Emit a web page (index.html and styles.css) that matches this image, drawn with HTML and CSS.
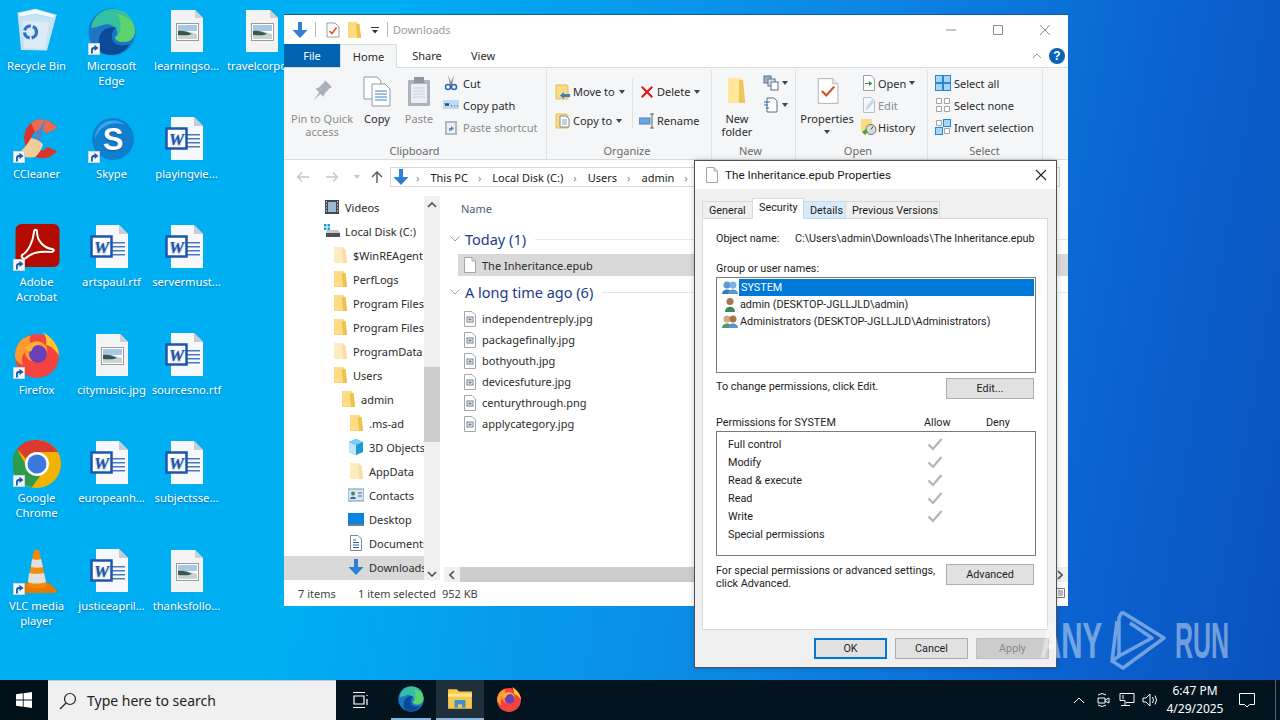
FILE: index.html
```html
<!DOCTYPE html>
<html lang="en">
<head>
<meta charset="utf-8">
<title>Downloads</title>
<link rel="stylesheet" href="styles.css">
</head>
<body>
<svg class="sprite" width="0" height="0" aria-hidden="true">
<defs>
<symbol id="s-arrow" viewBox="0 0 12 12"><rect x=".5" y=".5" width="11" height="11" fill="#f4f8fc" stroke="#c8d4de"/><path d="M3 10.500V7c0-2 1.500-3.200 3.500-3.200V1.800L10.500 5 6.500 8V6C5.200 6 4.800 6.800 4.800 8v2.500z" fill="#1c5aa8"/></symbol>
<symbol id="s-bin" viewBox="0 0 48 48"><path d="M4.500 5 22.500 1 43.500 7 34 42.500 8 42z" fill="#c6e2f4"/><path d="M4.500 5 22.500 1 43.500 7 40 10 22 6 7 9z" fill="#f2fbff" stroke="#a5cfe8" stroke-width=".6"/><path d="M10 13 36 14 32 41 11 40z" fill="#dcecf6"/><circle cx="17.500" cy="24" r="6" fill="none" stroke="#2e73c8" stroke-width="3.200" stroke-dasharray="8 2"/></symbol>
<symbol id="s-edge" viewBox="0 0 48 48"><circle cx="24" cy="24" r="23.500" fill="#1b76c8"/><path d="M3 20C5 8 14 1 25 1c12 0 22 8 22 22 0 8-6 11-12 11-4 0-8-2-8-5 2-1 3-3 2-6-2-5-8-8-14-6C10 19 6 20 3 20z" fill="#35c1a1"/><path d="M30 6c9 2 17 8 17 17 0 8-6 11-12 11-4 0-8-2-8-5 5-1 8-8 3-23z" fill="#6bd85e" opacity=".75"/><path d="M14 45C26 50 38 44 41 36c-8 3-14 1-16-3-3-6 0-12 4-13-8-3-17 2-18 11-1 6 0 11 3 14z" fill="#0c4a96"/></symbol>
<symbol id="s-ccleaner" viewBox="0 0 48 48"><path d="M44 12C38 3 26 1 18 7 9 14 9 30 18 38c8 7 20 5 26-3l-10-4c-3 4-8 5-12 2-5-4-5-13 0-17 4-3 9-2 12 1z" fill="#d8362a"/><path d="M44 12C38 3 26 1 18 7l4 9c4-3 9-2 12 1z" fill="#ee6a4e"/><path d="M33 2 27 26l-7-3z" fill="#4f87c8"/><path d="M18 22c5 1 10 3 12 7-2 5-4 9-8 12-6 1-13 0-18-3 6-4 10-9 14-16z" fill="#f0ce9a"/></symbol>
<symbol id="s-skype" viewBox="0 0 48 48"><circle cx="25" cy="23" r="21" fill="#0f7fd0"/><path d="M7 23a18 18 0 0 1 30-14A22 22 0 0 0 7 23z" fill="#37a9ea"/><text x="25" y="34" text-anchor="middle" font-family="Liberation Sans, sans-serif" font-weight="700" font-size="31" fill="#fff">S</text></symbol>
<symbol id="s-acrobat" viewBox="0 0 48 48"><rect x="2.500" y="0" width="44" height="43" rx="6" fill="#b30b00"/><path d="M9 31c6-3 11-13 12-23 .2-3 3-3 3 0 0 9 7 16 15 17 3 .5 2 3-1 3-10-1-20 1-25 6-3 2-5-1-4-3z" fill="none" stroke="#fff" stroke-width="2"/></symbol>
<symbol id="s-firefox" viewBox="0 0 48 48"><circle cx="24" cy="24" r="22" fill="#f5443f"/><path d="M2 24C2 12 10 4 18 4c-2 3-2 5 0 7 4-3 12-2 15 3 4 7-1 16-10 16-6 0-11-4-11-10-3 3-4 8-2 13-5-2-8-5-8-9z" fill="#ff9b2c"/><path d="M30 0c8 5 16 13 16 24-3-6-8-10-13-11 1-5 0-9-3-13z" fill="#ffc62e"/><circle cx="25" cy="22" r="9" fill="#6b3fb7"/><path d="M12 16c4-5 12-7 18-4-6 0-10 2-11 6-2 3-5 1-7-2z" fill="#ffb13a"/></symbol>
<symbol id="s-chrome" viewBox="0 0 48 48"><circle cx="24" cy="24" r="24" fill="#f0b400"/><path d="M24 0a24 24 0 0 1 21 12H24a12 12 0 0 0-11 7L4 9A24 24 0 0 1 24 0z" fill="#db3a2e"/><path d="M4 9l10 18a12 12 0 0 0 13 9l-8 11A24 24 0 0 1 4 9z" fill="#2f9a47"/><circle cx="24" cy="24" r="12" fill="#fff"/><circle cx="24" cy="24" r="9.500" fill="#3c78dc"/></symbol>
<symbol id="s-vlc" viewBox="0 0 48 48"><path d="M7 42 12 35h24l8 7c0 2-2 3-5 3H10c-3 0-3-1-3-3z" fill="#e87a00"/><path d="M21 2h5l8 36c-5 3-15 3-20 0z" fill="#f58a07"/><path d="M19 11c2 1 7 1 9 0l2 8c-3 1-9 1-12 0zM16 25c4 1 12 1 15 0l2 9c-5 2-14 2-18 0z" fill="#e0e0e0"/></symbol>
<symbol id="s-imgdoc" viewBox="0 0 48 48"><path d="M8 2h24l8 8v34H8z" fill="#f3f3f3"/><path d="M32 2v8h8z" fill="#d0d0d0"/><rect x="13.500" y="15.500" width="22" height="17" fill="#fff" stroke="#9b9b9b"/><path d="M15 17h19v6H15z" fill="#a8c8e4"/><path d="M15 23c6-1 13 1 19 3v5H15z" fill="#c8d4d4"/><path d="M15 23c5-1 10 1 14 3-4 2-10 1-14 1z" fill="#3a5650"/></symbol>
<symbol id="s-word" viewBox="0 0 48 48"><path d="M8 1h23l9 9v34H8z" fill="#f7f8fb"/><path d="M31 1v9h9z" fill="#c9ccd3"/><path d="M24 18h13v1.500H24zM24 22h13v1.500H24zM24 26h13v1.500H24zM24 30h13v1.500H24z" fill="#4a7abd"/><rect x="3.500" y="12.500" width="20" height="20" fill="#fff" stroke="#1d55ad" stroke-width="2.500"/><text x="13.500" y="28.500" text-anchor="middle" font-family="Liberation Serif, serif" font-style="italic" font-weight="700" font-size="17" fill="#1d55ad">W</text></symbol>
<symbol id="s-down" viewBox="0 0 16 16"><path d="M6 0h4v8h5.500L8 16 .5 8H6z" fill="#2f7fd6"/></symbol>
<symbol id="s-folder" viewBox="0 0 16 16"><path d="M2 0h9l1 1 1 1v14H2z" fill="#fddb82"/><path d="M10 2h3.500L15 14v2h-4z" fill="#efc04c"/></symbol>
<symbol id="s-bigfolder" viewBox="0 0 32 32"><path d="M7 3h13l2 3v22H7z" fill="#ffe79b"/><path d="M18 5h4l2 20v3h-6z" fill="#f0c65a"/></symbol>
<symbol id="s-props" viewBox="0 0 16 16"><path d="M2 1h8l4 4v10H2z" fill="#fff" stroke="#9d9d9d"/><path d="M4.500 9 7 11.500l4.500-6" fill="none" stroke="#d8532a" stroke-width="1.500"/></symbol>
<symbol id="s-blank" viewBox="0 0 16 16"><path d="M2.500 .5h7.500l3.500 3.500v11.500h-11z" fill="#fff" stroke="#a6a6a6"/><path d="M10 .5V4h3.500" fill="none" stroke="#a6a6a6"/></symbol>
<symbol id="s-jpg" viewBox="0 0 16 16"><path d="M2.500 .5h7.500l3.500 3.500v11.500h-11z" fill="#fff" stroke="#a6a6a6"/><rect x="5" y="6" width="6" height="5" fill="#fff" stroke="#6c7f91"/><rect x="6.500" y="7.500" width="3" height="2" fill="#6c7f91"/></symbol>
<symbol id="s-pin" viewBox="-6 -6 44 44"><path d="M14 20 4 29l8-11-5-5 5-2 7-7 1-3 10 10-3 1-7 7-2 5z" fill="#a9b1bd"/></symbol>
<symbol id="s-copy" viewBox="0 0 32 32"><path d="M3 2h13l4 4v18H3z" fill="#fff" stroke="#8e9aa8"/><path d="M11 9h13l5 5v17H11z" fill="#fff" stroke="#8e9aa8"/><path d="M14 16h12M14 19h12M14 22h12M14 25h12" stroke="#3d80c4"/></symbol>
<symbol id="s-paste" viewBox="0 0 32 32"><rect x="5" y="5" width="22" height="26" rx="1" fill="#acb5bf"/><rect x="8" y="9" width="16" height="19" fill="#ebeff4"/><rect x="11" y="2" width="10" height="6" fill="#8e98a3"/><path d="M10 13h12M10 16h12M10 19h12M10 22h12" stroke="#c9d3de"/></symbol>
<symbol id="s-cut" viewBox="0 0 16 16"><path d="M5 0 8 7 11 0 9 10 7 10z" fill="#8a8a8a"/><circle cx="5" cy="12" r="2.500" fill="none" stroke="#2a6bb0" stroke-width="1.500"/><circle cx="11" cy="12" r="2.500" fill="none" stroke="#2a6bb0" stroke-width="1.500"/></symbol>
<symbol id="s-path" viewBox="0 0 16 16"><rect y="3" width="16" height="9" fill="#bcdcf5"/><path d="M2 6l1 3 1-3 1 3 1-3M8 9h1M11 9h1M14 9h1" stroke="#244e7a" fill="none"/></symbol>
<symbol id="s-pshort" viewBox="0 0 16 16"><rect x="2" y="2" width="12" height="14" fill="#b0b8c2"/><rect x="4" y="4" width="8" height="10" fill="#edf0f4"/><path d="M6 12V9h2V7l3 2.500L8 12v-1.500H7.500V12z" fill="#5e86b0"/></symbol>
<symbol id="s-move" viewBox="0 0 16 16"><path d="M1 1h11l1 2v12H1z" fill="#fddb82" stroke="#e4bc52"/><path d="M15 10H9V8l-4 3.500L9 15v-2h6z" fill="#3c7cc2"/></symbol>
<symbol id="s-copyto" viewBox="0 0 16 16"><path d="M1 1h11l1 2v12H1z" fill="#fddb82" stroke="#e4bc52"/><path d="M5 3h6l3 3v8H5z" fill="#fff" stroke="#7c8894"/><path d="M7 7h5M7 9h5M7 11h5" stroke="#8aa0b4"/></symbol>
<symbol id="s-x" viewBox="0 0 16 16"><path d="M2 3.500 3.500 2 8 6.500 12.500 2 14 3.500 9.500 8 14 12.500 12.500 14 8 9.500 3.500 14 2 12.500 6.500 8z" fill="#e01c1c"/></symbol>
<symbol id="s-rename" viewBox="0 0 16 16"><rect x="0" y="5" width="11" height="6" fill="#6aa7df" stroke="#4682bd"/><path d="M13 1v14M11 1h4M11 15h4" stroke="#5d5d5d" fill="none"/></symbol>
<symbol id="s-newitem" viewBox="0 0 16 16"><rect x="1" y="1" width="7" height="7" fill="#9fb3c4" stroke="#5d7185"/><rect x="5" y="4" width="7" height="7" fill="#dde6ee" stroke="#5d7185"/><rect x="8" y="7" width="7" height="8" fill="#fff" stroke="#5d7185"/></symbol>
<symbol id="s-easy" viewBox="0 0 16 16"><path d="M4 1h7l3 3v11H4z" fill="#fff" stroke="#5d7185"/><path d="M1 5h6M1 8h4M3 11h3" stroke="#2a6bb0" fill="none"/></symbol>
<symbol id="s-bigprops" viewBox="-6 -1 44 38"><path d="M4 1h20l7 7v27H4z" fill="#fff" stroke="#9a9a9a"/><path d="M24 1v7h7" fill="#eee" stroke="#9a9a9a"/><path d="M9 18l6 6L26 12" fill="none" stroke="#d5532c" stroke-width="3"/></symbol>
<symbol id="s-open" viewBox="0 0 16 16"><path d="M2.500.5h7.500l3.500 3.500v11.500h-11z" fill="#fff" stroke="#9aa3ad"/><path d="M4 8h4V6l3.500 2.500L8 11V9H4z" fill="#3b9a3b"/></symbol>
<symbol id="s-edit" viewBox="0 0 16 16"><path d="M2.500.5h7.500l3.500 3.500v11.500h-11z" fill="#f4f7fb" stroke="#b5c0cc"/><path d="M4 14 6 9l5-6 2 2-5 6z" fill="#c4d6e8"/></symbol>
<symbol id="s-history" viewBox="0 0 16 16"><rect width="11" height="12" fill="#fddb82"/><circle cx="10" cy="10.500" r="5" fill="#d8dbe0" stroke="#707070"/><path d="M1 13l4-3 2 3-3 3z" fill="#4ca23d"/><path d="M10 10.500l2-3" stroke="#444"/></symbol>
<symbol id="s-all" viewBox="0 0 16 16"><rect width="16" height="16" fill="#2a85d6"/><path d="M1 1h6v6H1zM9 1h6v6H9zM1 9h6v6H1zM9 9h6v6H9z" fill="#a6d6f5"/></symbol>
<symbol id="s-none" viewBox="0 0 16 16"><path d="M1.500 1.500h5v5h-5zM9.500 1.500h5v5h-5zM1.500 9.500h5v5h-5zM9.500 9.500h5v5h-5z" fill="#fff" stroke="#a2a2a2"/></symbol>
<symbol id="s-invert" viewBox="0 0 16 16"><path d="M1.500 1.500h5v5h-5zM9.500 9.500h5v5h-5z" fill="#fff" stroke="#a2a2a2"/><path d="M8 0h8v8H8zM0 8h8v8H0z" fill="#2a85d6"/><path d="M9 1h6v6H9zM1 9h6v6H1z" fill="#a6d6f5"/></symbol>
<symbol id="s-video" viewBox="0 0 16 16"><rect x="1" y="1" width="14" height="14" fill="#3d4a55"/><rect x="4" y="3" width="8" height="10" fill="#9dbad4"/><path d="M2 3h1M2 6h1M2 9h1M2 12h1M13 3h1M13 6h1M13 9h1M13 12h1" stroke="#fff"/></symbol>
<symbol id="s-disk" viewBox="0 0 16 16"><rect x="2" y="10" width="14" height="4" fill="#4c5056"/><path d="M3 7h11l2 3H2z" fill="#c4c8cc"/><path d="M0 1h2.500v2.500H0zM3.500 1H6v2.500H3.500zM0 4.500h2.500V7H0zM3.500 4.500H6V7H3.500z" fill="#1d9bd8"/></symbol>
<symbol id="s-3d" viewBox="0 0 16 16"><path d="M8 0 15 3v10l-7 3-7-3V3z" fill="#1a9bd6"/><path d="M1 3l7 3v10l-7-3z" fill="#bfe7f6"/><path d="M8 0l7 3-7 3-7-3z" fill="#7fd0ee"/></symbol>
<symbol id="s-contacts" viewBox="0 0 16 16"><rect y="2" width="16" height="12" fill="#d7e6f3" stroke="#7a95ad"/><circle cx="5" cy="6.500" r="2" fill="#3d8a62"/><path d="M2 12c0-3 6-3 6 0z" fill="#3d6a8a"/><path d="M10 6h4M10 9h4" stroke="#567"/></symbol>
<symbol id="s-desktop" viewBox="0 0 16 16"><rect y="2" width="16" height="11" fill="#0a84e0"/><rect y="13" width="16" height="2" fill="#6d7d8c"/></symbol>
<symbol id="s-docs" viewBox="0 0 16 16"><path d="M2.500.5h7.500l3.500 3.500v11.500h-11z" fill="#fff" stroke="#7a8a98"/><path d="M5 5h3M5 7.500h6M5 10h6M5 12.500h6" stroke="#34648f"/></symbol>
<symbol id="s-user1" viewBox="0 0 16 16"><circle cx="5" cy="5" r="3.500" fill="#5b9bd5"/><path d="M0 14c0-6 10-6 10 0z" fill="#3b78b8"/><circle cx="11" cy="5" r="3.500" fill="#7eb2e0"/><path d="M6 14c0-6 10-6 10 0z" fill="#5a94cf"/></symbol>
<symbol id="s-user2" viewBox="0 0 16 16"><circle cx="8" cy="4.500" r="3.500" fill="#a6764f"/><path d="M3 15c0-7 10-7 10 0z" fill="#3e8a5e"/></symbol>
<symbol id="s-user3" viewBox="0 0 16 16"><circle cx="5" cy="5" r="3.500" fill="#d4a878"/><path d="M0 14c0-6 10-6 10 0z" fill="#4d9a6b"/><circle cx="11" cy="5" r="3.500" fill="#a6764f"/><path d="M6 14c0-6 10-6 10 0z" fill="#5a94cf"/></symbol>
<symbol id="s-check" viewBox="0 0 16 16"><path d="M1.500 8.500 6 13l8.500-10" fill="none" stroke="#b4b4b4" stroke-width="2.200"/></symbol>
<symbol id="s-tb-files" viewBox="0 0 24 24"><path d="M1 3h8l2 2h12v16H1z" fill="#f6c94c"/><path d="M1 7h22v3H1z" fill="#ffe58a"/><path d="M7 13h10v7H7z" fill="#3e8fd0"/><path d="M10 17h4v3h-4z" fill="#f6c94c"/></symbol>
</defs>
</svg>

<div class="screen">
  <main class="desktop">
    <div class="icon-grid">
      <div class="dicon"><svg class="dimg"><use href="#s-bin"/></svg><span>Recycle Bin</span></div>
      <div class="dicon"><span class="wrap"><svg class="dimg"><use href="#s-ccleaner"/></svg><svg class="arrow"><use href="#s-arrow"/></svg></span><span>CCleaner</span></div>
      <div class="dicon"><span class="wrap"><svg class="dimg"><use href="#s-acrobat"/></svg><svg class="arrow"><use href="#s-arrow"/></svg></span><span>Adobe<br>Acrobat</span></div>
      <div class="dicon"><span class="wrap"><svg class="dimg"><use href="#s-firefox"/></svg><svg class="arrow"><use href="#s-arrow"/></svg></span><span>Firefox</span></div>
      <div class="dicon"><span class="wrap"><svg class="dimg"><use href="#s-chrome"/></svg><svg class="arrow"><use href="#s-arrow"/></svg></span><span>Google<br>Chrome</span></div>
      <div class="dicon"><span class="wrap"><svg class="dimg"><use href="#s-vlc"/></svg><svg class="arrow"><use href="#s-arrow"/></svg></span><span>VLC media<br>player</span></div>

      <div class="dicon"><span class="wrap"><svg class="dimg"><use href="#s-edge"/></svg><svg class="arrow"><use href="#s-arrow"/></svg></span><span>Microsoft<br>Edge</span></div>
      <div class="dicon"><span class="wrap"><svg class="dimg"><use href="#s-skype"/></svg><svg class="arrow"><use href="#s-arrow"/></svg></span><span>Skype</span></div>
      <div class="dicon"><svg class="dimg"><use href="#s-word"/></svg><span>artspaul.rtf</span></div>
      <div class="dicon"><svg class="dimg"><use href="#s-imgdoc"/></svg><span>citymusic.jpg</span></div>
      <div class="dicon"><svg class="dimg"><use href="#s-word"/></svg><span>europeanh...</span></div>
      <div class="dicon"><svg class="dimg"><use href="#s-word"/></svg><span>justiceapril...</span></div>

      <div class="dicon"><svg class="dimg"><use href="#s-imgdoc"/></svg><span>learningso...</span></div>
      <div class="dicon"><svg class="dimg"><use href="#s-word"/></svg><span>playingvie...</span></div>
      <div class="dicon"><svg class="dimg"><use href="#s-word"/></svg><span>servermust...</span></div>
      <div class="dicon"><svg class="dimg"><use href="#s-word"/></svg><span>sourcesno.rtf</span></div>
      <div class="dicon"><svg class="dimg"><use href="#s-word"/></svg><span>subjectsse...</span></div>
      <div class="dicon"><svg class="dimg"><use href="#s-imgdoc"/></svg><span>thanksfollo...</span></div>

      <div class="dicon"><svg class="dimg"><use href="#s-imgdoc"/></svg><span>travelcorpo...</span></div>
    </div>

    <section class="explorer">
      <header class="titlebar">
        <svg class="i16"><use href="#s-down"/></svg>
        <i class="qsep"></i>
        <svg class="i16"><use href="#s-props"/></svg>
        <svg class="i16"><use href="#s-folder"/></svg>
        <svg class="qdrop" viewBox="0 0 8 8"><path d="M0 1h8v1H0zM1 4h6L4 7.500z" fill="#333"/></svg>
        <i class="qsep"></i>
        <span class="wintitle">Downloads</span>
        <div class="winctl">
          <svg viewBox="0 0 12 12"><path d="M1 6h10" stroke="#8d8d8d"/></svg>
          <svg viewBox="0 0 12 12"><path d="M1.500 1.500h9v9h-9z" fill="none" stroke="#8d8d8d"/></svg>
          <svg viewBox="0 0 12 12"><path d="M1 1l10 10M11 1 1 11" stroke="#8d8d8d"/></svg>
        </div>
      </header>
      <nav class="tabs">
        <span class="tab file">File</span>
        <span class="tab home">Home</span>
        <span class="tab share">Share</span>
        <span class="tab view">View</span>
        <svg class="collapse" viewBox="0 0 10 6"><path d="M1 5l4-4 4 4" fill="none" stroke="#a0a0a0"/></svg>
        <span class="help">?</span>
      </nav>
      <div class="ribbon">
        <div class="group g-clip">
          <div class="gbody">
            <div class="big pin off"><svg class="bigimg"><use href="#s-pin"/></svg><span>Pin to Quick<br>access</span></div>
            <div class="big copy"><svg class="bigimg"><use href="#s-copy"/></svg><span>Copy</span></div>
            <div class="big paste off"><svg class="bigimg"><use href="#s-paste"/></svg><span>Paste</span></div>
            <div class="rows">
              <div class="row"><svg class="i16"><use href="#s-cut"/></svg>Cut</div>
              <div class="row"><svg class="i16"><use href="#s-path"/></svg>Copy path</div>
              <div class="row off"><svg class="i16"><use href="#s-pshort"/></svg>Paste shortcut</div>
            </div>
          </div>
          <div class="glabel">Clipboard</div>
        </div>
        <div class="group g-org">
          <div class="gbody">
            <div class="rows two c-move">
              <div class="row"><svg class="i16"><use href="#s-move"/></svg>Move to<b class="caret"></b></div>
              <div class="row"><svg class="i16"><use href="#s-copyto"/></svg>Copy to<b class="caret"></b></div>
            </div>
            <i class="vsep"></i>
            <div class="rows two">
              <div class="row"><svg class="i16"><use href="#s-x"/></svg>Delete<b class="caret"></b></div>
              <div class="row"><svg class="i16"><use href="#s-rename"/></svg>Rename</div>
            </div>
          </div>
          <div class="glabel">Organize</div>
        </div>
        <div class="group g-new">
          <div class="gbody">
            <div class="big newf"><svg class="bigimg"><use href="#s-bigfolder"/></svg><span>New<br>folder</span></div>
            <div class="rows tiny">
              <div class="row"><svg class="i16"><use href="#s-newitem"/></svg><b class="caret"></b></div>
              <div class="row"><svg class="i16"><use href="#s-easy"/></svg><b class="caret"></b></div>
            </div>
          </div>
          <div class="glabel">New</div>
        </div>
        <div class="group g-open">
          <div class="gbody">
            <div class="big propsb"><svg class="bigimg"><use href="#s-bigprops"/></svg><span>Properties</span><b class="caret solo"></b></div>
            <div class="rows">
              <div class="row"><svg class="i16"><use href="#s-open"/></svg>Open<b class="caret"></b></div>
              <div class="row off"><svg class="i16"><use href="#s-edit"/></svg>Edit</div>
              <div class="row"><svg class="i16"><use href="#s-history"/></svg>History</div>
            </div>
          </div>
          <div class="glabel">Open</div>
        </div>
        <div class="group g-sel">
          <div class="gbody">
            <div class="rows">
              <div class="row"><svg class="i16"><use href="#s-all"/></svg>Select all</div>
              <div class="row"><svg class="i16"><use href="#s-none"/></svg>Select none</div>
              <div class="row"><svg class="i16"><use href="#s-invert"/></svg>Invert selection</div>
            </div>
          </div>
          <div class="glabel">Select</div>
        </div>
      </div>
      <div class="addrbar">
        <svg class="navbtn" viewBox="0 0 14 12"><path d="M13 6H2M6 1.500 1.500 6 6 10.500" fill="none" stroke="#c6c6c6" stroke-width="1.300"/></svg>
        <svg class="navbtn" viewBox="0 0 14 12"><path d="M1 6h11M8 1.500 12.500 6 8 10.500" fill="none" stroke="#c6c6c6" stroke-width="1.300"/></svg>
        <b class="caret pale"></b>
        <svg class="navbtn up" viewBox="0 0 14 14"><path d="M7 13V2M2 7l5-5 5 5" fill="none" stroke="#5f5f5f" stroke-width="1.500"/></svg>
        <div class="addr">
          <svg class="i16"><use href="#s-down"/></svg>
          <span class="sep">›</span><span>This PC</span>
          <span class="sep">›</span><span>Local Disk (C:)</span>
          <span class="sep">›</span><span>Users</span>
          <span class="sep">›</span><span>admin</span>
          <span class="sep">›</span>
        </div>
      </div>
      <div class="fbody">
        <aside class="navpane">
          <ul class="tree">
            <li class="l0"><svg class="i16"><use href="#s-video"/></svg>Videos</li>
            <li class="l00"><svg class="i16"><use href="#s-disk"/></svg>Local Disk (C:)</li>
            <li class="l1"><svg class="i16 faded"><use href="#s-folder"/></svg>$WinREAgent</li>
            <li class="l1"><svg class="i16"><use href="#s-folder"/></svg>PerfLogs</li>
            <li class="l1"><svg class="i16"><use href="#s-folder"/></svg>Program Files</li>
            <li class="l1"><svg class="i16"><use href="#s-folder"/></svg>Program Files (x86)</li>
            <li class="l1"><svg class="i16 faded"><use href="#s-folder"/></svg>ProgramData</li>
            <li class="l1"><svg class="i16"><use href="#s-folder"/></svg>Users</li>
            <li class="l2"><svg class="i16"><use href="#s-folder"/></svg>admin</li>
            <li class="l3"><svg class="i16"><use href="#s-folder"/></svg>.ms-ad</li>
            <li class="l3"><svg class="i16"><use href="#s-3d"/></svg>3D Objects</li>
            <li class="l3"><svg class="i16 faded"><use href="#s-folder"/></svg>AppData</li>
            <li class="l3"><svg class="i16"><use href="#s-contacts"/></svg>Contacts</li>
            <li class="l3"><svg class="i16"><use href="#s-desktop"/></svg>Desktop</li>
            <li class="l3"><svg class="i16"><use href="#s-docs"/></svg>Documents</li>
            <li class="l3 cur"><svg class="i16"><use href="#s-down"/></svg>Downloads</li>
          </ul>
          <div class="vscroll">
            <svg viewBox="0 0 10 6"><path d="M1 5l4-4 4 4" fill="none" stroke="#505050" stroke-width="1.600"/></svg>
            <div class="vtrack"><i class="vthumb"></i></div>
            <svg viewBox="0 0 10 6"><path d="M1 1l4 4 4-4" fill="none" stroke="#505050" stroke-width="1.600"/></svg>
          </div>
        </aside>
        <section class="files">
          <div class="colhead">Name</div>
          <div class="ghead"><svg viewBox="0 0 10 6"><path d="M.5.500l4.500 4.500L9.500.5" fill="none" stroke="#9aa5b2"/></svg><span>Today (1)</span><i></i></div>
          <div class="frow sel"><svg class="i16"><use href="#s-blank"/></svg>The Inheritance.epub</div>
          <div class="ghead g2"><svg viewBox="0 0 10 6"><path d="M.5.500l4.500 4.500L9.500.5" fill="none" stroke="#9aa5b2"/></svg><span>A long time ago (6)</span><i></i></div>
          <div class="flist">
            <div class="frow"><svg class="i16"><use href="#s-jpg"/></svg>independentreply.jpg</div>
            <div class="frow"><svg class="i16"><use href="#s-jpg"/></svg>packagefinally.jpg</div>
            <div class="frow"><svg class="i16"><use href="#s-jpg"/></svg>bothyouth.jpg</div>
            <div class="frow"><svg class="i16"><use href="#s-jpg"/></svg>devicesfuture.jpg</div>
            <div class="frow"><svg class="i16"><use href="#s-jpg"/></svg>centurythrough.png</div>
            <div class="frow"><svg class="i16"><use href="#s-jpg"/></svg>applycategory.jpg</div>
          </div>
          <div class="hscroll">
            <svg viewBox="0 0 6 10"><path d="M5 1 1 5l4 4" fill="none" stroke="#505050" stroke-width="1.600"/></svg>
            <i class="hthumb"></i>
            <svg viewBox="0 0 6 10"><path d="M1 1l4 4-4 4" fill="none" stroke="#505050" stroke-width="1.600"/></svg>
          </div>
        </section>
      </div>
      <footer class="status">
        <span class="st1">7 items</span><span class="st2">1 item selected</span><span>952 KB</span>
        <svg class="stview" viewBox="0 0 10 10"><path d="M.5.500h9v9h-9zM3 3h5M3 5h5M3 7h5" fill="none" stroke="#7a7a7a"/></svg>
      </footer>
    </section>

    <section class="dialog">
      <header class="dtitle">
        <svg class="i16"><use href="#s-blank"/></svg>
        <span>The Inheritance.epub Properties</span>
        <svg class="dclose" viewBox="0 0 12 12"><path d="M1 1l10 10M11 1 1 11" stroke="#222" stroke-width="1.100"/></svg>
      </header>
      <div class="dbody">
        <div class="dtabs">
          <span class="dtab">General</span>
          <span class="dtab act">Security</span>
          <span class="dtab hov">Details</span>
          <span class="dtab">Previous Versions</span>
        </div>
        <div class="dpanel">
          <div class="objrow"><span class="objk">Object name:</span><span>C:\Users\admin\Downloads\The Inheritance.epub</span></div>
          <div class="lbl grp">Group or user names:</div>
          <div class="listbox">
            <div class="lrow"><svg class="i16"><use href="#s-user1"/></svg><span class="hl">SYSTEM</span></div>
            <div class="lrow"><svg class="i16"><use href="#s-user2"/></svg><span>admin (DESKTOP-JGLLJLD\admin)</span></div>
            <div class="lrow"><svg class="i16"><use href="#s-user3"/></svg><span>Administrators (DESKTOP-JGLLJLD\Administrators)</span></div>
          </div>
          <div class="editrow"><span>To change permissions, click Edit.</span><button class="btn wide">Edit...</button></div>
          <div class="permhead"><span>Permissions for SYSTEM</span><span class="pa">Allow</span><span class="pd">Deny</span></div>
          <div class="permbox">
            <div class="prow"><span>Full control</span><svg class="chk"><use href="#s-check"/></svg></div>
            <div class="prow"><span>Modify</span><svg class="chk"><use href="#s-check"/></svg></div>
            <div class="prow"><span>Read &amp; execute</span><svg class="chk"><use href="#s-check"/></svg></div>
            <div class="prow"><span>Read</span><svg class="chk"><use href="#s-check"/></svg></div>
            <div class="prow"><span>Write</span><svg class="chk"><use href="#s-check"/></svg></div>
            <div class="prow"><span>Special permissions</span></div>
          </div>
          <div class="advrow"><span>For special permissions or advanced settings,<br>click Advanced.</span><button class="btn wide">Advanced</button></div>
        </div>
        <div class="dfoot">
          <button class="btn ok">OK</button>
          <button class="btn">Cancel</button>
          <button class="btn dis">Apply</button>
        </div>
      </div>
    </section>

    <div class="watermark">
      <span class="wm-any">ANY</span>
      <svg class="wm-play" viewBox="0 0 56 62"><path d="M12 3 54 29 13 59 2 52 9 47M9 47V9L12 3M2 52 7 12M20 14 42 29 9 47" fill="none" stroke="#fff" stroke-width="3.500" stroke-linejoin="round"/></svg>
      <span class="wm-run">RUN</span>
    </div>
  </main>

  <footer class="taskbar">
    <div class="start"><svg viewBox="0 0 16 16"><path d="M0 2.300 6.800 1.300V7.600H0zM7.600 1.200 16 0V7.600H7.600zM0 8.400H6.800V14.700L0 13.700zM7.600 8.400H16V16L7.600 14.800z" fill="#fff"/></svg></div>
    <div class="search"><svg viewBox="0 0 18 18"><circle cx="11" cy="7" r="5.500" fill="none" stroke="#222" stroke-width="1.200"/><path d="M7 11 1 17" stroke="#222" stroke-width="1.300"/></svg><span>Type here to search</span></div>
    <div class="tbi taskview"><svg viewBox="0 0 18 18"><path d="M3 5h10v8H3zM2 1.500h12M2 16.500h12M16 4v1M16 8v6" fill="none" stroke="#fff" stroke-width="1.200"/></svg></div>
    <div class="tbi run"><svg class="tbimg"><use href="#s-edge"/></svg></div>
    <div class="tbi run act"><svg class="tbimg"><use href="#s-tb-files"/></svg></div>
    <div class="tbi ff"><svg class="tbimg"><use href="#s-firefox"/></svg></div>
    <div class="tray">
      <svg class="t1" viewBox="0 0 12 7"><path d="M1 6l5-5 5 5" fill="none" stroke="#fff"/></svg>
      <svg class="t2" viewBox="0 0 14 16"><path d="M2 3q4-3 8 0M2 13q4 3 8 0M2 6h7v5H2zM9 8l4-2v5l-4-2" fill="none" stroke="#fff"/></svg>
      <svg class="t3" viewBox="0 0 16 14"><path d="M1 .5h14v9H7M1 .5v7h5v5H2M6 12.500h5M3 3h2M3 5h2" fill="none" stroke="#fff"/></svg>
      <svg class="t4" viewBox="0 0 16 14"><path d="M1 5h3l4-4v12L4 9H1zM10.500 4q2 3 0 6M13 2.500q3 4.500 0 9" fill="none" stroke="#fff"/></svg>
      <div class="clock"><span>6:47 PM</span><span>4/29/2025</span></div>
      <svg class="t5" viewBox="0 0 16 15"><path d="M.5.5h15v11h-5L8 14l-2.500-2.500h-5z" fill="none" stroke="#fff"/></svg>
      <i class="showdesk"></i>
    </div>
  </footer>
</div>
</body>
</html>
```
FILE: styles.css
```css
* { box-sizing: border-box; }
html, body { margin: 0; height: 100%; overflow: hidden; }
body { font: 12px/15px "Noto Sans", "Open Sans", sans-serif; color: #2b2b2b; }
.sprite { position: absolute; }
ul { list-style: none; margin: 0; padding: 0; }
i, b { display: block; }
.i16 { width: 16px; height: 16px; flex: none; }
.faded { opacity: .5; }

.screen { width: 1280px; height: 720px; display: flex; flex-direction: column; }
.desktop {
  flex: 1; position: relative; overflow: hidden;
  background: linear-gradient(100deg, #00aef2 0%, #00aef2 28%, #0d86e4 62%, #0a62d0 85%, #0a52bd 100%);
}

/* desktop icons */
.icon-grid {
  display: grid; grid-template-columns: repeat(4, 75px); grid-template-rows: repeat(6, 108px);
  grid-auto-flow: column; padding-top: 8px; margin-left: -1px; height: 680px; width: 300px;
}
.dicon { display: flex; flex-direction: column; align-items: center; color: #fff; text-align: center; white-space: nowrap; text-shadow: 0 1px 2px rgba(0, 40, 90, .45); font-size: 11.2px; line-height: 15px; }
.dimg { width: 48px; height: 48px; display: block; }
.dicon > span:last-child { margin-top: 2px; }
.wrap { position: relative; display: block; width: 48px; height: 48px; }
.arrow { position: absolute; left: 0; bottom: 1px; width: 12px; height: 12px; }

/* explorer */
.explorer { position: absolute; left: 284px; top: 14px; width: 784px; height: 592px; background: #fff; display: flex; flex-direction: column; border-top: 1px solid #0f5f9e; font-size: 11px; }
.titlebar { height: 29px; display: flex; align-items: center; padding-left: 8px; flex: none; }
.titlebar > .i16:nth-child(3) { margin-left: 9px; }
.titlebar > .i16:nth-child(4) { margin-left: 5px; }
.qsep { width: 1px; height: 15px; background: #b8b8b8; margin-left: 7px; }
.qdrop { width: 8px; height: 8px; margin-left: 9px; }
.titlebar .qdrop + .qsep { margin-left: 8px; }
.wintitle { margin-left: 5px; color: #9a9a9a; }
.winctl { margin-left: auto; display: flex; gap: 35px; padding-right: 17px; }
.winctl svg { width: 12px; height: 12px; }

.tabs { height: 24px; display: flex; align-items: stretch; flex: none; position: relative; border-bottom: 1px solid #dadbdc; }
.tab { display: flex; align-items: center; justify-content: center; }
.tab.file { width: 56px; background: #0063b1; color: #fff; }
.tab.home { width: 57px; background: #f5f6f7; border: 1px solid #dadbdc; border-bottom: 0; margin-bottom: -1px; }
.tab.share { width: 60px; }
.tab.view { width: 52px; }
.collapse { width: 10px; height: 6px; margin: 9px 0 0 auto; }
.help { width: 16px; height: 16px; margin: 4px 3px 0 7px; border-radius: 50%; background: #0b63b8; color: #fff; font: 700 12px/16px "Liberation Sans", sans-serif; text-align: center; }

.ribbon { height: 92px; flex: none; display: flex; background: #f5f6f7; border-bottom: 1px solid #dadbdc; }
.group { display: flex; flex-direction: column; border-right: 1px solid #e0e1e3; margin-top: 2px; }
.gbody { flex: 1; display: flex; min-height: 0; }
.glabel { height: 17px; margin-right: 8px; text-align: center; color: #6a6a6a; line-height: 17px; }
.g-clip { width: 263px; padding-left: 7px; }
.g-org { width: 165px; padding-left: 8px; }
.g-org .glabel { margin-right: 12px; }
.g-new { width: 84px; padding-left: 2px; }
.g-open { width: 132px; padding-left: 1px; }
.g-sel { width: 115px; padding-left: 7px; }
.big { display: flex; flex-direction: column; align-items: center; text-align: center; padding-top: 5px; line-height: 13px; white-space: nowrap; }
.bigimg { width: 32px; height: 32px; margin-bottom: 5px; display: block; flex: none; }
.pin { width: 62px; }
.copy { width: 48px; }
.paste { width: 36px; }
.newf { width: 46px; }
.propsb { width: 60px; }
.off { color: #8a8a8a; }
.rows { display: flex; flex-direction: column; padding-top: 2px; margin-left: 6px; }
.row { height: 22px; display: flex; align-items: center; gap: 4px; white-space: nowrap; }
.rows.two { padding-top: 7px; margin-left: 0; }
.rows.two .row { height: 29px; gap: 2px; }
.c-move { width: 77px; }
.vsep { width: 1px; height: 50px; margin: 8px 6px 0 0; background: #e0e1e3; }
.tiny { margin-left: 3px; }
.tiny .row { gap: 1px; }
.g-open .rows { margin-left: 4px; }
.g-open .row { gap: 1px; }
.g-sel .rows { margin-left: 0; }
.g-sel .row { gap: 3px; }
.caret { width: 0; height: 0; border: 3px solid transparent; border-top: 4px solid #444; border-bottom: 0; margin-left: 2px; }
.caret.solo { margin: 5px 0 0; }
.caret.pale { border-top-color: #c6c6c6; margin: 0 10px 0 0; }

.addrbar { height: 34px; flex: none; display: flex; align-items: center; padding-left: 12px; }
.navbtn { width: 14px; height: 12px; margin-right: 15px; }
.navbtn.up { height: 14px; margin-right: 6px; }
.addr { flex: 1; height: 20px; margin-right: 8px; border: 1px solid #d9d9d9; display: flex; align-items: center; padding-left: 2px; white-space: nowrap; color: #222; }
.addr .sep { color: #8a8a8a; margin: 0 11px 0 10px; }
.addr .i16 + .sep { margin-left: 7px; }

.fbody { flex: 1; display: flex; min-height: 0; }
.navpane { width: 156px; flex: none; display: flex; padding-top: 2px; }
.tree { width: 140px; overflow: hidden; flex: none; white-space: nowrap; }
.tree li { height: 24px; display: flex; align-items: center; gap: 5px; padding-bottom: 2px; }
.l00 { padding-left: 40px; }
.l0 { padding-left: 40px; }
.l1 { padding-left: 48px; }
.l2 { padding-left: 56px; }
.l3 { padding-left: 64px; }
.tree .cur { background: #d9d9d9; }
.vscroll { width: 16px; flex: none; background: #f0f0f0; display: flex; flex-direction: column; align-items: center; padding: 6px 0 3px; }
.vscroll svg { width: 10px; height: 6px; flex: none; }
.vtrack { flex: 1; width: 16px; padding-top: 159px; }
.vthumb { height: 75px; background: #cdcdcd; }
.files { flex: 1; position: relative; display: flex; flex-direction: column; padding: 6px 0 0 10px; min-width: 0; }
.colhead { padding-left: 11px; color: #4c607a; height: 18px; line-height: 18px; }
.ghead { display: flex; align-items: center; height: 24px; margin-top: 9px; color: #1e3a8a; font-size: 14.5px; }
.ghead svg { width: 10px; height: 6px; margin: 0 5px 0 0; flex: none; }
.ghead i { flex: 1; height: 1px; background: #e3e8ef; margin-left: 9px; }
.ghead.g2 { margin-top: 4px; }
.frow { height: 21px; display: flex; align-items: center; padding-left: 4px; gap: 4px; white-space: nowrap; }
.frow.sel { height: 22px; margin-left: 8px; background: #d9d9d9; padding-left: 4px; gap: 4px; margin-top: 3px; }
.flist { margin: 4px 0 0 8px; }
.hscroll { position: absolute; left: 4px; right: 0; bottom: -2px; height: 15px; background: #f0f0f0; display: flex; align-items: center; padding: 0 5px; gap: 5px; }
.hscroll svg { width: 6px; height: 10px; flex: none; }
.hthumb { flex: 1; height: 15px; background: #cdcdcd; }
.status { height: 26px; flex: none; display: flex; align-items: center; padding-left: 14px; color: #444; position: relative; }
.st1 { width: 60px; }
.st2 { width: 84px; }
.stview { width: 10px; height: 10px; margin-left: auto; margin-right: 3px; }

/* dialog */
.dialog { position: absolute; left: 694px; top: 160px; width: 363px; height: 508px; border: 1px solid #4f5357; background: #f0f0f0; display: flex; flex-direction: column; font: 10.8px/15px "Roboto", "Liberation Sans", sans-serif; color: #1c1c1c; box-shadow: 0 0 6px rgba(0,0,0,.2); z-index: 2; }
.dtitle { height: 28px; flex: none; background: #fff; display: flex; align-items: center; padding-left: 9px; gap: 5px; font-size: 11.7px; }
.dtitle span { padding-top: 1px; }
.dclose { width: 12px; height: 12px; margin-left: auto; margin-right: 9px; }
.dbody { flex: 1; padding: 9px 8px 0 7px; display: flex; flex-direction: column; min-height: 0; }
.dtabs { display: flex; height: 21px; align-items: flex-end; position: relative; z-index: 1; margin-bottom: -1px; }
.dtab { height: 18px; padding: 0 6px; line-height: 17px; border: 1px solid #d9d9d9; margin-left: -1px; background: #f0f0f0; white-space: nowrap; }
.dtab:first-child { margin-left: 0; width: 51px; }
.dtab.act { height: 21px; width: 52px; background: #fff; border-bottom-color: #fff; line-height: 18px; }
.dtab.hov { width: 43px; background: #d8eafa; border-color: #c4dcf0; }
.dtab:last-child { width: 95px; }
.dpanel { flex: 1; background: #fff; border: 1px solid #d9d9d9; padding: 12px 11px 0 13px; min-height: 0; }
.objrow { display: flex; height: 16px; white-space: nowrap; }
.objk { width: 79px; flex: none; }
.lbl.grp { margin-top: 14px; height: 15px; }
.listbox { margin-top: 1px; width: 320px; height: 96px; border: 1px solid #7a7a7a; padding: 1px; }
.lrow { height: 17px; display: flex; align-items: center; gap: 2px; padding-left: 4px; white-space: nowrap; }
.hl { flex: 1; background: #0078d7; color: #fff; height: 17px; line-height: 17px; padding-left: 2px; margin-left: -1px; }
.editrow { display: flex; justify-content: space-between; align-items: flex-start; margin-top: 5px; padding-right: 2px; width: 320px; height: 21px; }
.editrow span { padding-top: 1px; }
.advrow { display: flex; justify-content: space-between; align-items: flex-start; margin-top: 8px; padding-right: 2px; width: 320px; }
.advrow span { line-height: 13px; }
.btn { width: 73px; height: 21px; padding: 0; border: 1px solid #adadad; background: #e1e1e1; font: 10.8px/15px "Roboto", "Liberation Sans", sans-serif; color: #1c1c1c; flex: none; }
.btn.wide { width: 88px; }
.btn.ok { border: 2px solid #0078d7; }
.btn.dis { color: #8a8a8a; background: #cccccc; border-color: #bfbfbf; }
.permhead { display: flex; margin-top: 16px; width: 320px; height: 15px; position: relative; }
.pa { position: absolute; left: 208px; }
.pd { position: absolute; left: 270px; }
.permbox { margin-top: 1px; width: 320px; height: 125px; border: 1px solid #7a7a7a; padding: 3px 0 0 11px; }
.prow { height: 18px; display: flex; align-items: center; justify-content: space-between; padding-right: 92px; }
.chk { width: 16px; height: 16px; }
.dfoot { height: 37px; flex: none; display: flex; gap: 8px; justify-content: flex-end; padding: 8px 0 0; margin-right: -1px; }

/* watermark */
.watermark { position: absolute; left: 1040px; top: 609px; width: 192px; height: 62px; display: flex; align-items: center; color: #fff; opacity: .42; z-index: 3; font: 700 50px/50px "Liberation Sans", sans-serif; pointer-events: none; }
.wm-any { display: block; width: 62px; transform: scaleX(.59); transform-origin: left center; margin-top: 2px; }
.wm-play { width: 56px; height: 62px; margin-left: 8px; flex: none; }
.wm-run { display: block; transform: scaleX(.5); transform-origin: left center; margin-left: 9px; margin-top: 2px; }

/* taskbar */
.taskbar { height: 40px; flex: none; background: #03141f; display: flex; align-items: stretch; color: #fff; }
.start { width: 48px; display: flex; align-items: center; justify-content: center; background: #021019; }
.start svg { width: 16px; height: 16px; }
.search { width: 288px; background: #f0f0f0; color: #222; display: flex; align-items: center; padding-left: 11px; gap: 10px; font-size: 14px; border-top: 1px solid #bcd; }
.search svg { width: 18px; height: 18px; flex: none; }
.tbi { display: flex; align-items: center; justify-content: center; }
.taskview { width: 48px; }
.taskview svg { width: 18px; height: 18px; }
.tbimg { width: 26px; height: 26px; }
.tbi.run { width: 40px; margin-left: 7px; margin-right: 5px; border-bottom: 2px solid #86b5e0; }
.tbi.act { width: 48px; margin: 0; background: #1f2f3b; }
.tbi.ff { width: 50px; }
.tray { margin-left: auto; display: flex; align-items: center; font-size: 12px; }
.tray svg { flex: none; }
.t1 { width: 12px; height: 7px; margin-right: 11px; }
.t2 { width: 14px; height: 16px; margin-right: 9px; }
.t3 { width: 16px; height: 14px; margin-right: 7px; }
.t4 { width: 16px; height: 14px; margin-right: 6px; }
.clock { display: flex; flex-direction: column; align-items: center; width: 62px; line-height: 18px; margin-right: 13px; font-size: 12px; }
.t5 { width: 16px; height: 15px; margin-right: 20px; }
.showdesk { width: 1px; height: 40px; background: #54616b; margin-right: 4px; }
```
